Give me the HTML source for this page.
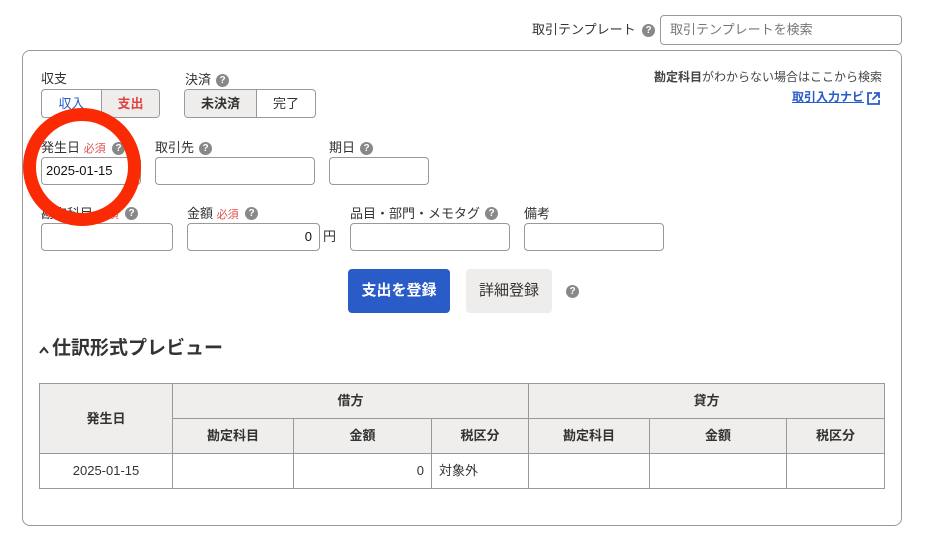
<!DOCTYPE html>
<html><head><meta charset="utf-8"><style>
*{box-sizing:border-box;margin:0;padding:0}
body{width:925px;height:550px;background:#fff;font-family:"Liberation Sans","Noto Sans CJK JP",sans-serif;color:#333;font-size:13px;line-height:18px;position:relative;overflow:hidden}
.a{position:absolute;white-space:nowrap}
.q{position:absolute;width:13px;height:13px;border-radius:50%;background:#888;color:#fff;font-size:10px;font-weight:bold;text-align:center;line-height:13px}
.in{position:absolute;border:1px solid #999;border-radius:4px;background:#fff;height:28px}
.req{color:#e05050;font-size:11px}
.tog{position:absolute;display:flex;border:1px solid #999;border-radius:4px;overflow:hidden;height:29px}
.tog div{display:flex;align-items:center;justify-content:center;font-size:13px}
table{position:absolute;left:39px;top:383px;border-collapse:collapse;font-size:13px}
td,th{border:1px solid #999;height:35px;text-align:center}
th{background:#efeeed;font-weight:bold}
</style></head><body>
<div class="a" style="left:532px;top:21px">取引テンプレート</div>
<div class="q" style="left:642px;top:24px">?</div>
<div class="in" style="left:660px;top:15px;width:242px;height:30px;padding:5px 9px;color:#777">取引テンプレートを検索</div>
<div class="a" style="left:22px;top:50px;width:880px;height:476px;border:1px solid #999;border-radius:8px"></div>

<div class="a" style="left:41px;top:70px">収支</div>
<div class="tog" style="left:41px;top:89px;width:119px"><div style="width:59px;color:#2a5cc8">収入</div><div style="flex:1;background:#eeedec;border-left:1px solid #999;color:#e04444;font-weight:bold">支出</div></div>
<div class="a" style="left:185px;top:71px">決済</div><div class="q" style="left:216px;top:74px">?</div>
<div class="tog" style="left:184px;top:89px;width:132px"><div style="width:72px;background:#eeedec;font-weight:bold;border-right:1px solid #999">未決済</div><div style="flex:1">完了</div></div>
<div class="a" style="right:43px;top:68px;font-size:12px;color:#444"><b>勘定科目</b>がわからない場合はここから検索</div>
<div class="a" style="right:61px;top:88px;font-size:12px;color:#2a5cc8;font-weight:bold;text-decoration:underline">取引入力ナビ</div>
<svg class="a" style="left:866px;top:91px" width="15" height="15" viewBox="0 0 15 15" fill="none" stroke="#2a5cc8" stroke-width="1.8"><path d="M6 2H2v11h11V9M8 2h5v5M13 2L6.5 8.5"/></svg>

<div class="a" style="left:41px;top:139px">発生日 <span class="req">必須</span></div><div class="q" style="left:112px;top:142px">?</div>
<div class="in" style="left:41px;top:157px;width:100px;padding:4px 4px;font-size:13px;color:#111">2025-01-15</div>
<div class="a" style="left:155px;top:139px">取引先</div><div class="q" style="left:199px;top:142px">?</div>
<div class="in" style="left:155px;top:157px;width:160px"></div>
<div class="a" style="left:329px;top:139px">期日</div><div class="q" style="left:360px;top:142px">?</div>
<div class="in" style="left:329px;top:157px;width:100px"></div>

<div class="a" style="left:41px;top:205px">勘定科目 <span class="req">必須</span></div><div class="q" style="left:125px;top:207px">?</div>
<div class="in" style="left:41px;top:223px;width:132px"></div>
<div class="a" style="left:187px;top:205px">金額 <span class="req">必須</span></div><div class="q" style="left:245px;top:207px">?</div>
<div class="in" style="left:187px;top:223px;width:133px;text-align:right;padding:4px 7px;color:#111">0</div>
<div class="a" style="left:323px;top:228px">円</div>
<div class="a" style="left:350px;top:205px">品目・部門・メモタグ</div><div class="q" style="left:485px;top:207px">?</div>
<div class="in" style="left:350px;top:223px;width:160px"></div>
<div class="a" style="left:524px;top:205px">備考</div>
<div class="in" style="left:524px;top:223px;width:140px"></div>

<div class="a" style="left:348px;top:269px;width:102px;height:44px;background:#2a5cc8;border-radius:4px;color:#fff;font-weight:bold;font-size:15px;text-align:center;line-height:44px">支出を登録</div>
<div class="a" style="left:466px;top:269px;width:86px;height:44px;background:#eeedec;border-radius:4px;color:#333;font-size:15px;text-align:center;line-height:44px">詳細登録</div>
<div class="q" style="left:566px;top:285px">?</div>

<svg class="a" style="left:38px;top:345px" width="12" height="10" viewBox="0 0 12 10" fill="none" stroke="#333" stroke-width="2"><path d="M2 8L6 3L10 8"/></svg>
<div class="a" style="left:52px;top:337px;font-size:19px;line-height:24px;font-weight:bold;color:#333">仕訳形式プレビュー</div>

<table>
<tr><th rowspan="2" style="width:133px">発生日</th><th colspan="3">借方</th><th colspan="3">貸方</th></tr>
<tr><th style="width:121px">勘定科目</th><th style="width:138px">金額</th><th style="width:97px">税区分</th><th style="width:121px">勘定科目</th><th style="width:137px">金額</th><th style="width:98px">税区分</th></tr>
<tr><td>2025-01-15</td><td></td><td style="text-align:right;padding-right:7px">0</td><td style="text-align:left;padding-left:7px">対象外</td><td></td><td></td><td></td></tr>
</table>

<svg class="a" style="left:0;top:0" width="925" height="550"><circle cx="82" cy="167" r="52.5" fill="none" stroke="#fa2a05" stroke-width="13"/></svg>
</body></html>
